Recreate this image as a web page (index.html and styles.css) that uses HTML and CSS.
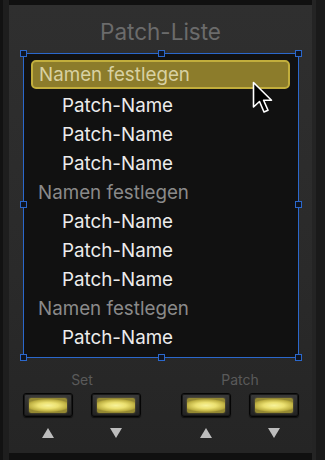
FILE: index.html
```html
<!DOCTYPE html>
<html lang="de">
<head>
    <meta charset="UTF-8" />
    <meta name="viewport" content="width=device-width, initial-scale=1.0" />
    <title>Patch-Liste</title>
    <link rel="stylesheet" href="styles.css">
</head>
<body>
    <div class="frame">
        <div class="panel">
            <h2 class="title">Patch-Liste</h2>

            <div class="list-wrap">
                <ul class="patch-list">
                    <li class="row group selected"><span>Namen festlegen</span></li>
                    <li class="row patch">Patch-Name</li>
                    <li class="row patch">Patch-Name</li>
                    <li class="row patch">Patch-Name</li>
                    <li class="row group">Namen festlegen</li>
                    <li class="row patch">Patch-Name</li>
                    <li class="row patch">Patch-Name</li>
                    <li class="row patch">Patch-Name</li>
                    <li class="row group">Namen festlegen</li>
                    <li class="row patch">Patch-Name</li>
                </ul>

                <!-- selection handles -->
                <span class="handle h-tl"></span>
                <span class="handle h-tc"></span>
                <span class="handle h-tr"></span>
                <span class="handle h-ml"></span>
                <span class="handle h-mr"></span>
                <span class="handle h-bl"></span>
                <span class="handle h-bc"></span>
                <span class="handle h-br"></span>

                <svg class="cursor" width="24" height="34" viewBox="0 0 24 34">
                    <path d="M1.5 1.5 L1.5 26 L7.5 20.5 L12 31 L16 29.3 L11.6 19.2 L19.5 19.2 Z"
                          fill="#000" stroke="#fff" stroke-width="1.6" stroke-linejoin="round" />
                </svg>
            </div>

            <div class="controls">
                <div class="group-ctl">
                    <div class="ctl-label">Set</div>
                    <div class="btn-row">
                        <div class="btn-col">
                            <button class="lamp-btn"><span class="lamp"></span></button>
                            <span class="arrow up"></span>
                        </div>
                        <div class="btn-col">
                            <button class="lamp-btn"><span class="lamp"></span></button>
                            <span class="arrow down"></span>
                        </div>
                    </div>
                </div>
                <div class="group-ctl">
                    <div class="ctl-label">Patch</div>
                    <div class="btn-row">
                        <div class="btn-col">
                            <button class="lamp-btn"><span class="lamp"></span></button>
                            <span class="arrow up"></span>
                        </div>
                        <div class="btn-col">
                            <button class="lamp-btn"><span class="lamp"></span></button>
                            <span class="arrow down"></span>
                        </div>
                    </div>
                </div>
            </div>
        </div>
    </div>
</body>
</html>
```

FILE: styles.css
```css
* {
    box-sizing: border-box;
}

body {
    margin: 0;
    width: 325px;
    height: 460px;
    background-color: #141414;
    font-family: Inter, "Open Sans", sans-serif;
    overflow: hidden;
}

.frame {
    height: 460px;
    padding: 5px 13px 7px 9px;
    background: linear-gradient(to right, #121212 0, #121212 3px, #1e1e1e 3px, #1e1e1e 9px, transparent 9px),
                linear-gradient(to left, #1a1a1a 0, #1a1a1a 9px, #242424 9px, #242424 13px, transparent 13px);
    background-color: #101010;
}

.panel {
    height: 448px;
    background: linear-gradient(#2f2f2f, #2a2a2a 60%, #252525);
    padding-top: 14px;
}

.title {
    margin: 0;
    text-align: center;
    font-size: 22.5px;
    font-weight: 400;
    line-height: 26px;
    color: #6b6b6b;
}

.list-wrap {
    position: relative;
    margin: 8px 13px 0 14px;
    height: 305px;
    background-color: #111;
    border: 1px solid #2b68cc;
}

.patch-list {
    list-style: none;
    margin: 0;
    padding: 6px 0 0 0;
}

.row {
    height: 29px;
    line-height: 29px;
    font-size: 18.8px;
    white-space: nowrap;
}

.group {
    padding-left: 14px;
    color: #8a8a8a;
}

.patch {
    padding-left: 38px;
    color: #ececec;
}

.selected {
    margin: 0 8px 2px 7px;
    padding-left: 6px;
    background-color: #8c7c2b;
    border: 2px solid #c2ae3c;
    border-radius: 5px;
    line-height: 25px;
    color: #d8d1a2;
}

.handle {
    position: absolute;
    width: 7px;
    height: 7px;
    border: 1px solid #2b68cc;
    background-color: #0f1420;
}

.h-tl { left: -4px; top: -4px; }
.h-tc { left: 134px; top: -4px; }
.h-tr { right: -4px; top: -4px; }
.h-ml { left: -4px; top: 147px; }
.h-mr { right: -4px; top: 147px; }
.h-bl { left: -4px; bottom: -4px; }
.h-bc { left: 134px; bottom: -4px; }
.h-br { right: -4px; bottom: -4px; }

.cursor {
    position: absolute;
    left: 228px;
    top: 27px;
}

.controls {
    display: flex;
    justify-content: space-between;
    margin: 14px 13px 0 14px;
}

.group-ctl {
    width: 118px;
}

.ctl-label {
    text-align: center;
    font-size: 14px;
    line-height: 16px;
    color: #5a5a5a;
}

.btn-row {
    display: flex;
    justify-content: space-between;
    margin-top: 5px;
}

.btn-col {
    display: flex;
    flex-direction: column;
    align-items: center;
}

.lamp-btn {
    width: 50px;
    height: 24px;
    padding: 0;
    margin: 0;
    border: 1px solid #050505;
    border-radius: 3px;
    background: linear-gradient(#3a3a3a, #222);
    box-shadow: inset 0 0 0 1px #181818, 0 1px 1px rgba(0,0,0,0.6);
    display: flex;
    align-items: center;
    justify-content: center;
    cursor: pointer;
}

.lamp {
    width: 38px;
    height: 15px;
    border-radius: 2px;
    background: radial-gradient(ellipse 60% 45% at center, #f7f29a 0, #ebe070 45%, #bcae40 85%, #948832 100%);
    box-shadow: 0 0 2px rgba(220, 200, 80, 0.5);
}

.arrow {
    width: 0;
    height: 0;
    margin-top: 11px;
    border-left: 6px solid transparent;
    border-right: 6px solid transparent;
}

.arrow.up {
    border-bottom: 10px solid #bdbdbd;
}

.arrow.down {
    border-top: 10px solid #bdbdbd;
}
```
